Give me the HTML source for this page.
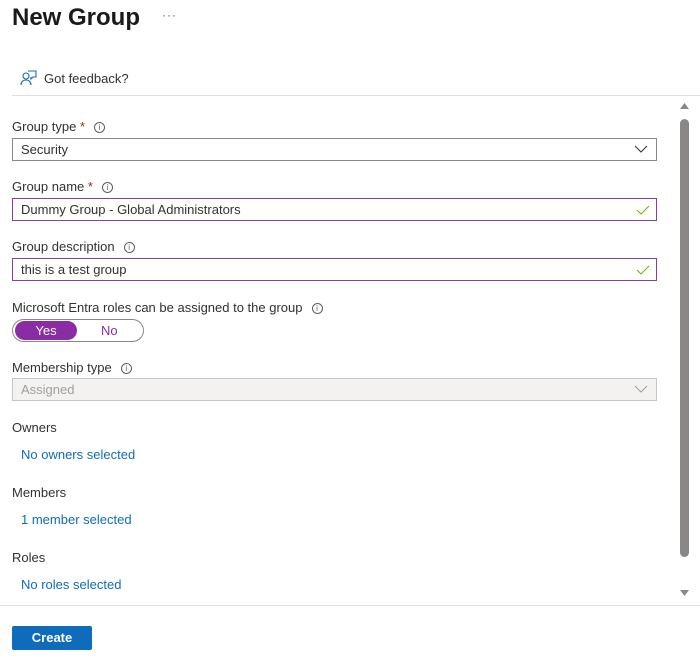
<!DOCTYPE html>
<html><head><style>
*{box-sizing:border-box;margin:0;padding:0}
body{width:700px;height:667px;background:#fff;font-family:"Liberation Sans",sans-serif;color:#323130;position:relative;overflow:hidden;font-size:13px}
.a{position:absolute}
.lbl{position:absolute;left:12px;font-size:13px;color:#323130}
.req{color:#a4262c}
.info{display:inline-block;width:11px;height:11px;border:1px solid #605e5c;border-radius:50%;font-size:8px;line-height:9px;text-align:center;color:#605e5c;margin-left:9px;vertical-align:1px}
.box{position:absolute;left:12px;width:645px;height:23px;border:1px solid #8a8886;padding-left:8px;line-height:21px;font-size:13px}
.pur{border-color:#8a3f9e}
.link{position:absolute;left:21px;color:#0f6cbd;font-size:13px}
</style></head><body>
<div class="a" style="left:12px;top:4px;font-size:24px;font-weight:bold;color:#1b1a19">New Group</div>
<div class="a" style="left:162px;top:8px;font-size:12px;color:#605e5c;letter-spacing:1px">···</div>
<svg class="a" style="left:20px;top:69px" width="18" height="18" viewBox="0 0 18 18" fill="none" stroke="#0f6cbd" stroke-width="1.1"><circle cx="6" cy="7" r="3"/><path d="M1 16c0-3 2-5 5-5s5 2 5 5"/><path d="M8 2h8v6h-3l-2 2V8"/></svg>
<div class="a" style="left:44px;top:71px;font-size:13px">Got feedback?</div>
<div class="a" style="left:12px;top:95px;width:688px;height:1px;background:#e1dfdd"></div>
<div class="lbl" style="top:119px">Group type <span class="req">*</span><span class="info">i</span></div>
<div class="box" style="top:138px">Security</div>
<div class="lbl" style="top:179px">Group name <span class="req">*</span><span class="info">i</span></div>
<div class="box pur" style="top:198px">Dummy Group - Global Administrators</div>
<div class="lbl" style="top:239px">Group description<span class="info">i</span></div>
<div class="box pur" style="top:258px">this is a test group</div>
<div class="lbl" style="top:300px">Microsoft Entra roles can be assigned to the group<span class="info">i</span></div>
<div class="a" style="left:12px;top:319px;width:132px;height:23px;border:1px solid #8a8886;border-radius:12px"></div>
<div class="a" style="left:15px;top:321px;width:62px;height:19px;background:#8a2da5;border-radius:10px;color:#fff;text-align:center;line-height:19px">Yes</div>
<div class="a" style="left:101px;top:323px;color:#8a2da5">No</div>
<div class="lbl" style="top:360px">Membership type<span class="info">i</span></div>
<div class="box" style="top:378px;background:#f3f2f1;border-color:#c8c6c4;color:#a19f9d">Assigned</div>
<svg class="a" style="left:634px;top:144px" width="14" height="10"><path d="M1 2l6 6 6-6" stroke="#323130" fill="none"/></svg>
<svg class="a" style="left:634px;top:384px" width="14" height="10"><path d="M1 2l6 6 6-6" stroke="#a19f9d" fill="none"/></svg>
<svg class="a" style="left:636px;top:204px" width="14" height="12"><path d="M1 6l4 4 8-8" stroke="#6bb700" fill="none"/></svg>
<svg class="a" style="left:636px;top:264px" width="14" height="12"><path d="M1 6l4 4 8-8" stroke="#6bb700" fill="none"/></svg>
<div class="lbl" style="top:420px">Owners</div>
<div class="link" style="top:447px">No owners selected</div>
<div class="lbl" style="top:485px">Members</div>
<div class="link" style="top:512px">1 member selected</div>
<div class="lbl" style="top:550px">Roles</div>
<div class="link" style="top:577px">No roles selected</div>
<svg class="a" style="left:680px;top:102px" width="9" height="8"><path d="M0 7L4.5 1L9 7Z" fill="#8a8886"/></svg>
<div class="a" style="left:680px;top:119px;width:9px;height:438px;background:#8a8886;border-radius:5px"></div>
<svg class="a" style="left:680px;top:589px" width="9" height="8"><path d="M0 1L4.5 7L9 1Z" fill="#8a8886"/></svg>
<div class="a" style="left:0;top:605px;width:700px;height:1px;background:#e1dfdd"></div>
<div class="a" style="left:12px;top:626px;width:80px;height:24px;background:#0f6cbd;color:#fff;font-weight:bold;text-align:center;line-height:24px;border-radius:2px">Create</div>
</body></html>
